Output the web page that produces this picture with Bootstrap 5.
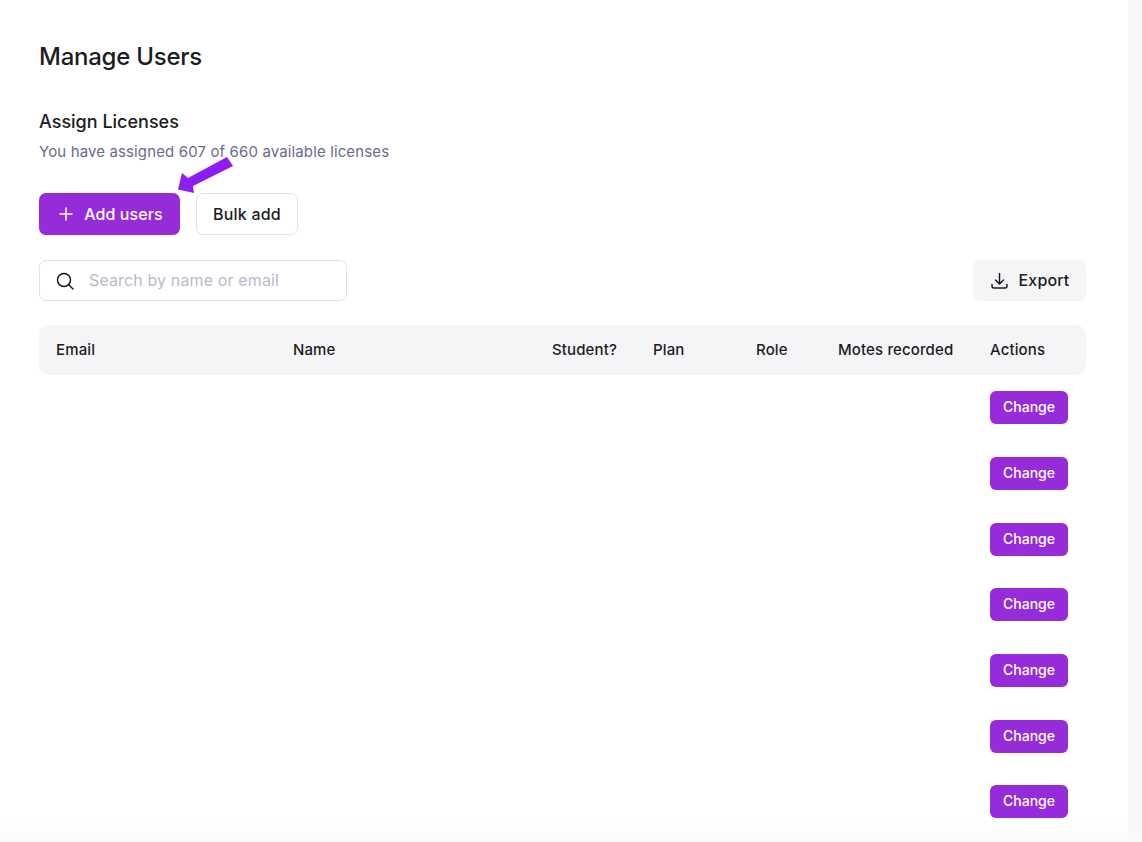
<!DOCTYPE html>
<html lang="en">
<head>
<meta charset="utf-8">
<title>Manage Users</title>
<link href="https://cdn.jsdelivr.net/npm/bootstrap@5.3.0/dist/css/bootstrap.min.css" rel="stylesheet">
<style>
html,body{height:842px;overflow:hidden}
body{font-family:Inter,"Liberation Sans",sans-serif;color:#1c1c22;background:#fff;position:relative}
.shell{width:1128px;height:842px;padding:0 42px 0 39px}
.rail{flex:1;background:#f7f7fa}
.page-title{font-size:24px;font-weight:500;line-height:30px;margin:42px 0 0;letter-spacing:-.25px}
.sub-title{font-size:18px;font-weight:500;line-height:24px;margin:38px 0 0}
.sub-note{font-size:15px;line-height:20px;color:#6b6b8a;margin:8px 0 0;letter-spacing:.13px}
.act-row{margin-top:31px;gap:16px;position:relative}
.btn-purple{background:#962cd9;border:0;color:#fff;font-size:16px;font-weight:500;border-radius:7px;height:42px;width:141px;gap:11px;padding:0 0 0 3px;letter-spacing:.08px}
.btn-purple:hover{background:#962cd9;color:#fff}
.btn-line{background:#fff;border:1px solid #e1e1e8;color:#1c1c22;font-size:16px;font-weight:500;border-radius:7px;height:42px;width:102px;padding:0;letter-spacing:.2px}
.arrow-mark{position:absolute;left:137px;top:-38px}
.tool-row{margin-top:25px}
.search-box{width:308px;height:41px;border:1px solid #e1e1e8;border-radius:7px;padding-left:16px;gap:15px}
.search-box input{border:0;outline:0;padding:0 0 2px;flex:1;min-width:0;font-size:16px;background:transparent;color:#1c1c22;letter-spacing:.13px}
.search-box input::placeholder{color:#b9b9cc;opacity:1}
.btn-soft{background:#f5f5f7;border:0;color:#1c1c22;font-size:16px;font-weight:500;border-radius:7px;height:41px;width:113px;gap:11px;padding:0 0 0 1px;letter-spacing:.15px}
.btn-soft span{padding-bottom:2px}
.user-grid{margin:24px 0 0;table-layout:fixed;width:1047px;border-collapse:separate;border-spacing:0}
.user-grid th{background:#f5f5f7;height:50px;font-size:15px;font-weight:500;color:#1c1c22;padding:1px 0 0 17px;vertical-align:middle;border:0;white-space:nowrap;letter-spacing:.13px}
.user-grid th:first-child{border-radius:10px 0 0 10px}
.user-grid th:last-child{border-radius:0 10px 10px 0}
.user-grid td{height:65.7px;padding:0 0 0 17px;vertical-align:middle;border:0}
.btn-change{background:#962cd9;border:0;color:#fff;font-size:14px;font-weight:500;border-radius:6px;height:33px;width:78px;padding:0 0 2px}
.btn-change:hover{background:#962cd9;color:#fff}
.fade-foot{position:absolute;left:0;right:0;bottom:0;height:23px;background:linear-gradient(rgba(250,250,250,0),#fafafa);pointer-events:none}
</style>
</head>
<body>
<div class="d-flex">
<main class="shell">
  <h1 class="page-title">Manage Users</h1>
  <h2 class="sub-title">Assign Licenses</h2>
  <p class="sub-note">You have assigned 607 of 660 available licenses</p>
  <div class="d-flex act-row">
    <button type="button" class="btn btn-purple d-inline-flex align-items-center justify-content-center">
      <svg width="14" height="14" viewBox="0 0 14 14" fill="none" stroke="#fff" stroke-width="1.5" stroke-linecap="round"><path d="M7 1v12M1 7h12"/></svg>
      <span>Add users</span>
    </button>
    <button type="button" class="btn btn-line">Bulk add</button>
    <svg class="arrow-mark" width="58" height="40" viewBox="0 0 58 40"><path fill="#8f1cf2" d="M2 34.500L6 18L12 23L51 2L57 11L17 31L18 38Z"/></svg>
  </div>
  <div class="d-flex justify-content-between align-items-center tool-row">
    <div class="search-box d-flex align-items-center">
      <svg width="18" height="18" viewBox="0 0 18 18" fill="none" stroke="#1c1c22" stroke-width="1.500" stroke-linecap="round"><circle cx="8" cy="8" r="6.500"/><path d="M13 13l4 4"/></svg>
      <input type="text" placeholder="Search by name or email" aria-label="Search by name or email">
    </div>
    <button type="button" class="btn btn-soft d-inline-flex align-items-center justify-content-center">
      <svg width="17" height="18" viewBox="0 0 17 18" fill="none" stroke="#1c1c22" stroke-width="1.500" stroke-linecap="round" stroke-linejoin="round"><path d="M8.500 1.500v10M4.500 8l4 4 4-4M1 12.500v1.500a2 2 0 0 0 2 2h11a2 2 0 0 0 2-2v-1.500"/></svg>
      <span>Export</span>
    </button>
  </div>
  <table class="user-grid">
    <colgroup><col style="width:237px"><col style="width:259px"><col style="width:101px"><col style="width:103px"><col style="width:82px"><col style="width:152px"><col style="width:113px"></colgroup>
    <thead><tr><th>Email</th><th>Name</th><th>Student?</th><th>Plan</th><th>Role</th><th>Motes recorded</th><th>Actions</th></tr></thead>
    <tbody>
      <tr><td></td><td></td><td></td><td></td><td></td><td></td><td><button type="button" class="btn btn-change">Change</button></td></tr>
      <tr><td></td><td></td><td></td><td></td><td></td><td></td><td><button type="button" class="btn btn-change">Change</button></td></tr>
      <tr><td></td><td></td><td></td><td></td><td></td><td></td><td><button type="button" class="btn btn-change">Change</button></td></tr>
      <tr><td></td><td></td><td></td><td></td><td></td><td></td><td><button type="button" class="btn btn-change">Change</button></td></tr>
      <tr><td></td><td></td><td></td><td></td><td></td><td></td><td><button type="button" class="btn btn-change">Change</button></td></tr>
      <tr><td></td><td></td><td></td><td></td><td></td><td></td><td><button type="button" class="btn btn-change">Change</button></td></tr>
      <tr><td></td><td></td><td></td><td></td><td></td><td></td><td><button type="button" class="btn btn-change">Change</button></td></tr>
    </tbody>
  </table>
</main>
<div class="rail"></div>
</div>
<div class="fade-foot"></div>
<script src="https://cdn.jsdelivr.net/npm/bootstrap@5.3.0/dist/js/bootstrap.bundle.min.js"></script>
</body>
</html>
